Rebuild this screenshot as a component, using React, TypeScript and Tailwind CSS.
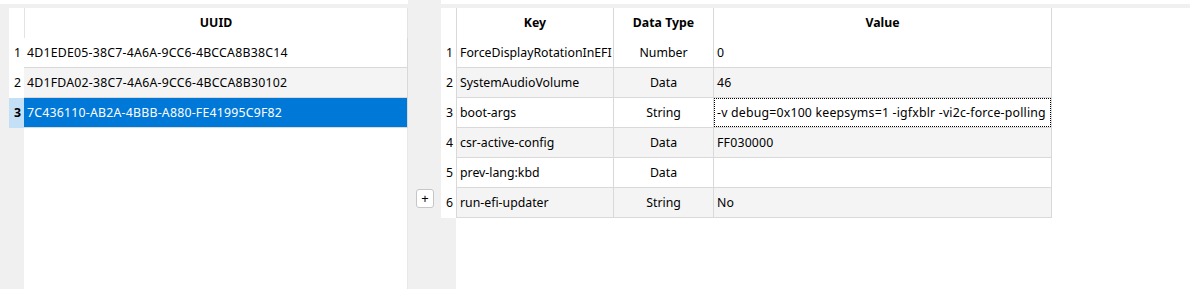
import React from "react";

const font = { fontFamily: '"Segoe UI", "Noto Sans", "Open Sans", sans-serif' };

const uuids = [
  "4D1EDE05-38C7-4A6A-9CC6-4BCCA8B38C14",
  "4D1FDA02-38C7-4A6A-9CC6-4BCCA8B30102",
  "7C436110-AB2A-4BBB-A880-FE41995C9F82",
];

const rows = [
  ["ForceDisplayRotationInEFI", "Number", "0"],
  ["SystemAudioVolume", "Data", "46"],
  ["boot-args", "String", "-v debug=0x100 keepsyms=1 -igfxblr -vi2c-force-polling"],
  ["csr-active-config", "Data", "FF030000"],
  ["prev-lang:kbd", "Data", ""],
  ["run-efi-updater", "String", "No"],
];

export default function App() {
  return (
    <div
      className="flex h-[289px] w-[1190px] overflow-hidden bg-white text-[12.3px] text-black"
      style={font}
    >
      {/* Left panel */}
      <div className="flex w-[408px] flex-col">
        <div className="h-[4px] bg-white" />
        <div className="h-[4px] bg-[#f0f0f0]" />
        <div className="flex flex-1 bg-[#f0f0f0] pl-[9px]">
          <div className="flex w-[399px] flex-col">
            <div className="flex h-[30px]">
              <div className="w-[15px] bg-white" />
              <div className="flex flex-1 items-center justify-center border-l border-r border-[#e3e3e3] bg-white pt-[1px] font-bold">
                UUID
              </div>
            </div>
            {uuids.map((u, i) => {
              const sel = i === 2;
              return (
                <div key={u} className="flex h-[30px]">
                  <div
                    className={
                      sel
                        ? "flex w-[15px] items-center justify-center bg-[#c4e0f6] pl-[2px] pt-[1px] font-bold"
                        : "flex w-[15px] items-center justify-center bg-white pl-[2px] pt-[1px]"
                    }
                  >
                    {i + 1}
                  </div>
                  <div
                    className={
                      sel
                        ? "flex flex-1 items-center border-b border-r border-[#d9d9d9] bg-[#0078d7] pl-[3px] pt-[1px] tracking-[0.22px] text-white"
                        : i % 2 === 1
                        ? "flex flex-1 items-center border-b border-r border-[#d9d9d9] bg-[#f4f4f4] pl-[3px] pt-[1px] tracking-[0.22px]"
                        : "flex flex-1 items-center border-b border-r border-[#d9d9d9] bg-white pl-[3px] pt-[1px] tracking-[0.22px]"
                    }
                  >
                    {u}
                  </div>
                </div>
              );
            })}
            <div className="flex flex-1">
              <div className="w-[15px] bg-[#f0f0f0]" />
              <div className="flex-1 border-r border-[#e8e8e8] bg-white" />
            </div>
          </div>
        </div>
      </div>

      {/* Gap column with add button */}
      <div className="flex w-[33px] flex-col bg-[#f0f0f0] pt-[189px] pl-[8px]">
        <button className="flex h-[19px] w-[18px] items-center justify-center rounded-[3px] border border-[#c6c6c6] bg-white text-[13px] leading-none text-black">
          +
        </button>
      </div>

      {/* Right panel */}
      <div className="flex flex-1 flex-col">
        <div className="h-[4px] bg-white" />
        <div className="h-[4px] bg-[#f0f0f0]" />
        <div className="flex flex-1 flex-col bg-white">
          <div className="flex h-[30px]">
            <div className="w-[15px] bg-white" />
            <div className="flex w-[157px] items-center justify-center border-l border-[#d9d9d9] pt-[1px] font-bold">
              Key
            </div>
            <div className="flex w-[100px] items-center justify-center border-l border-[#d9d9d9] pt-[1px] font-bold">
              Data Type
            </div>
            <div className="flex w-[339px] items-center justify-center border-l border-r border-[#d9d9d9] pt-[1px] font-bold">
              Value
            </div>
            <div className="flex-1" />
          </div>
          {rows.map((r, i) => {
            const bg = i % 2 === 1 ? "bg-[#f4f4f4]" : "bg-white";
            return (
              <div key={r[0]} className="flex h-[30px]">
                <div className="flex w-[15px] items-center justify-center bg-white pl-[2px] pt-[1px]">
                  {i + 1}
                </div>
                <div className={`flex w-[157px] items-center border-b border-l border-[#d9d9d9] pl-[3px] pt-[1px] ${bg}`}>
                  {r[0]}
                </div>
                <div className={`flex w-[100px] items-center justify-center border-b border-l border-[#d9d9d9] pt-[1px] ${bg}`}>
                  {r[1]}
                </div>
                <div className={`flex w-[339px] border-b border-l border-r border-[#d9d9d9] ${bg}`}>
                  {i === 2 ? (
                    <div className="flex flex-1 items-center overflow-hidden whitespace-nowrap border border-dotted border-black pl-[2px] pt-[1px] tracking-[0.2px]">
                      {r[2]}
                    </div>
                  ) : (
                    <div className="flex flex-1 items-center pl-[3px] pt-[1px] tracking-[0.2px]">{r[2]}</div>
                  )}
                </div>
                <div className="flex-1" />
              </div>
            );
          })}
          <div className="flex flex-1">
            <div className="w-[15px] bg-[#f0f0f0]" />
            <div className="flex-1 bg-white" />
          </div>
        </div>
      </div>
    </div>
  );
}
